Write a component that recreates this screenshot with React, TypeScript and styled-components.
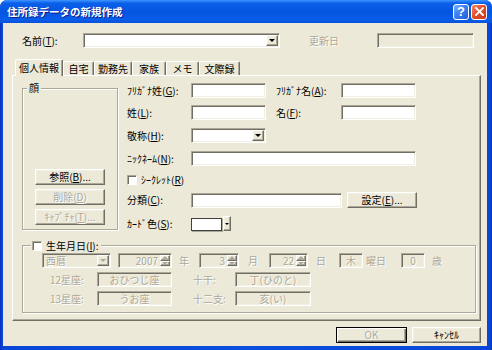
import styled, { createGlobalStyle, css } from 'styled-components'

const FACE = '#ece9d8'
const HILITE = '#ffffff'
const LIGHT = '#f1efe2'
const SHADOW = '#aca899'
const DARK = '#716f64'

const GlobalStyle = createGlobalStyle`
  *, *::before, *::after {
    box-sizing: border-box;
  }

  body {
    margin: 0;
    background: #ffffff;
    font-family: 'Noto Sans CJK JP', 'Noto Sans', sans-serif;
    font-size: 10px;
    color: #000000;
  }

  u {
    text-underline-offset: 1px;
  }
`

const sunken = css`
  border: 1px solid;
  border-color: ${SHADOW} ${HILITE} ${HILITE} ${SHADOW};
  box-shadow: inset 1px 1px ${DARK}, inset -1px -1px ${LIGHT};
`

const raised = css`
  border: 1px solid;
  border-color: ${HILITE} ${DARK} ${DARK} ${HILITE};
  box-shadow: inset -1px -1px ${SHADOW}, inset 1px 1px ${LIGHT};
`

const etched = css`
  border: 1px solid ${SHADOW};
  box-shadow: inset 1px 1px ${HILITE}, 1px 1px 0 ${HILITE};
`

const disabledText = css`
  color: ${SHADOW};
  text-shadow: 1px 1px 0 ${HILITE};
`

function Combo({ width, value, disabled }: { width: number; value?: string; disabled?: boolean }) {
  return (
    <Field $w={width} $disabled={disabled}>
      <FieldText $disabled={disabled}>{value}</FieldText>
      <DropButton>
        <Arrow $disabled={disabled} />
      </DropButton>
    </Field>
  )
}

function Spin({ width, value }: { width: number; value: string }) {
  return (
    <Field $w={width} $disabled>
      <FieldText $disabled $align="right">{value}</FieldText>
      <SpinButtons>
        <SpinHalf>
          <Arrow $disabled $up />
        </SpinHalf>
        <SpinHalf>
          <Arrow $disabled />
        </SpinHalf>
      </SpinButtons>
    </Field>
  )
}

function App() {
  return (
    <>
      <GlobalStyle />
      <Window>
        <TitleBar>
          <Title>住所録データの新規作成</Title>
          <CaptionButtons>
            <CaptionButton $kind="help">?</CaptionButton>
            <CaptionButton $kind="close">
              <svg width="9" height="9" viewBox="0 0 9 9">
                <path d="M1 1 L8 8 M8 1 L1 8" stroke="#ffffff" strokeWidth="1.8" strokeLinecap="square" />
              </svg>
            </CaptionButton>
          </CaptionButtons>
        </TitleBar>

        <Client>
          <NameRow>
            <Label $w={61}>
              名前(<u>T</u>):
            </Label>
            <Combo width={197} />
            <Label $w={68} $ml={29} $disabled>
              更新日
            </Label>
            <Field $w={97} $disabled />
          </NameRow>

          <TabStrip>
            <Tab $w={48} $active>個人情報</Tab>
            <Tab $w={31}>自宅</Tab>
            <Tab $w={38}>勤務先</Tab>
            <Tab $w={34}>家族</Tab>
            <Tab $w={33}>メモ</Tab>
            <Tab $w={41}>文際録</Tab>
          </TabStrip>

          <Panel>
            <Upper>
              <FaceGroup>
                <GroupTitle>顔</GroupTitle>
                <PushButton $w={70}>
                  参照(<u>B</u>)...
                </PushButton>
                <PushButton $w={70} $disabled>
                  削除(<u>D</u>)
                </PushButton>
                <PushButton $w={70} $disabled>
                  ｷｬﾌﾟﾁｬ(<u>T</u>)...
                </PushButton>
              </FaceGroup>

              <FormGrid>
                <Label>
                  ﾌﾘｶﾞﾅ姓(<u>G</u>):
                </Label>
                <Field $w={75} />
                <Label $col={4}>
                  ﾌﾘｶﾞﾅ名(<u>A</u>):
                </Label>
                <Field $w={75} />

                <Label>
                  姓(<u>L</u>):
                </Label>
                <Field $w={75} />
                <Label $col={4}>
                  名(<u>F</u>):
                </Label>
                <Field $w={75} />

                <Label>
                  敬称(<u>H</u>):
                </Label>
                <Combo width={75} />

                <Label $col={1}>
                  ﾆｯｸﾈｰﾑ(<u>N</u>):
                </Label>
                <Wide>
                  <Field $w={225} />
                </Wide>

                <CheckRow>
                  <CheckBox />
                  <span>
                    ｼｰｸﾚｯﾄ(<u>R</u>)
                  </span>
                </CheckRow>

                <Label $col={1}>
                  分類(<u>C</u>):
                </Label>
                <Wide>
                  <Field $w={151} />
                  <PushButton $w={70}>
                    設定(<u>E</u>)...
                  </PushButton>
                </Wide>

                <Label $col={1}>
                  ｶｰﾄﾞ色(<u>S</u>):
                </Label>
                <Wide>
                  <ColorBox />
                  <ColorDrop>
                    <Arrow $small />
                  </ColorDrop>
                </Wide>
              </FormGrid>
            </Upper>

            <BirthGroup>
              <BirthLegend>
                <CheckBox />
                <span>
                  生年月日(<u>I</u>):
                </span>
              </BirthLegend>

              <BirthRow>
                <Combo width={69} value="西暦" disabled />
                <Gap $ml={7} />
                <Spin width={54} value="2007" />
                <Unit $ml={7}>年</Unit>
                <Gap $ml={10} />
                <Spin width={40} value="3" />
                <Unit $ml={9}>月</Unit>
                <Gap $ml={11} />
                <Spin width={39} value="22" />
                <Unit $ml={8}>日</Unit>
                <Gap $ml={13} />
                <Field $w={24} $disabled>
                  <FieldText $disabled $align="center">木</FieldText>
                </Field>
                <Unit $ml={3}>曜日</Unit>
                <Gap $ml={15} />
                <Field $w={24} $disabled>
                  <FieldText $disabled $align="center">0</FieldText>
                </Field>
                <Unit $ml={7}>歳</Unit>
              </BirthRow>

              <InfoGrid>
                <Unit>12星座:</Unit>
                <Field $w={75} $disabled>
                  <FieldText $disabled $align="center">おひつじ座</FieldText>
                </Field>
                <Unit $col={4}>十干:</Unit>
                <Field $w={76} $disabled>
                  <FieldText $disabled $align="center">丁(ひのと)</FieldText>
                </Field>

                <Unit>13星座:</Unit>
                <Field $w={75} $disabled>
                  <FieldText $disabled $align="center">うお座</FieldText>
                </Field>
                <Unit $col={4}>十二支:</Unit>
                <Field $w={76} $disabled>
                  <FieldText $disabled $align="center">亥(い)</FieldText>
                </Field>
              </InfoGrid>
            </BirthGroup>
          </Panel>

          <Footer>
            <PushButton $w={71} $disabled $default>
              OK
            </PushButton>
            <PushButton $w={69}>ｷｬﾝｾﾙ</PushButton>
          </Footer>
        </Client>
      </Window>
    </>
  )
}

const Window = styled.div`
  width: 492px;
  height: 350px;
  display: flex;
  flex-direction: column;
  background: linear-gradient(90deg, #0a2fb8 0, #0846d8 2px, #0a4fe0 50%, #0846d8 calc(100% - 2px), #0a2fb8 100%);
  border-radius: 7px 7px 0 0;
  overflow: hidden;
`

const TitleBar = styled.div`
  height: 23px;
  flex: none;
  display: flex;
  align-items: center;
  padding: 0 5px 0 7px;
  background: linear-gradient(180deg, #3d95ff 0%, #0a5fe8 14%, #0555e2 55%, #0a5de8 85%, #0650dc 100%);
`

const Title = styled.div`
  flex: 1;
  color: #ffffff;
  font-weight: 700;
  font-size: 10.5px;
  line-height: 14px;
  text-shadow: 1px 1px 0 #0b1d8c;
`

const CaptionButtons = styled.div`
  display: flex;
  gap: 2px;
`

const CaptionButton = styled.div<{ $kind: 'help' | 'close' }>`
  width: 16px;
  height: 16px;
  border: 1px solid #ffffff;
  border-radius: 3px;
  display: flex;
  align-items: center;
  justify-content: center;
  color: #ffffff;
  font-family: 'Liberation Sans', sans-serif;
  font-weight: 700;
  font-size: 13px;
  line-height: 1;
  background: ${(p) =>
    p.$kind === 'close'
      ? 'linear-gradient(135deg, #f08a6c 0%, #e2502a 45%, #c8381a 100%)'
      : 'linear-gradient(135deg, #7fb2ff 0%, #3a80f2 45%, #1f5ed8 100%)'};
`

const Client = styled.div`
  flex: 1;
  margin: 0 5px 4px 3px;
  background: ${FACE};
  padding: 10px 6px 0 9px;
  display: flex;
  flex-direction: column;
`

const NameRow = styled.div`
  height: 15px;
  margin-left: 10px;
  display: flex;
  align-items: center;
`

const Label = styled.div<{ $w?: number; $ml?: number; $col?: number; $disabled?: boolean }>`
  ${(p) => (p.$w ? `width: ${p.$w}px;` : '')}
  ${(p) => (p.$ml ? `margin-left: ${p.$ml}px;` : '')}
  ${(p) => (p.$col ? `grid-column: ${p.$col};` : '')}
  height: 15px;
  display: flex;
  align-items: center;
  white-space: nowrap;
  line-height: 12px;
  ${(p) => (p.$disabled ? disabledText : '')}
`

const Field = styled.div<{ $w: number; $disabled?: boolean }>`
  ${sunken}
  width: ${(p) => p.$w}px;
  height: 15px;
  flex: none;
  padding: 1px;
  display: flex;
  align-items: stretch;
  background: ${(p) => (p.$disabled ? FACE : HILITE)};
`

const FieldText = styled.div<{ $disabled?: boolean; $align?: 'left' | 'right' | 'center' }>`
  flex: 1;
  padding: 0 2px;
  line-height: 11px;
  font-size: 10px;
  text-align: ${(p) => p.$align ?? 'left'};
  white-space: nowrap;
  ${(p) => (p.$disabled ? disabledText : '')}
`

const DropButton = styled.div`
  ${raised}
  width: 12px;
  flex: none;
  background: ${FACE};
  display: flex;
  align-items: center;
  justify-content: center;
`

const Arrow = styled.span<{ $disabled?: boolean; $up?: boolean; $small?: boolean }>`
  width: 0;
  height: 0;
  border-left: ${(p) => (p.$small ? 2 : 3)}px solid transparent;
  border-right: ${(p) => (p.$small ? 2 : 3)}px solid transparent;
  ${(p) => (p.$up ? 'border-bottom' : 'border-top')}: ${(p) => (p.$small ? 2 : 3)}px solid
    ${(p) => (p.$disabled ? SHADOW : '#000000')};
`

const SpinButtons = styled.div`
  width: 10px;
  flex: none;
  display: flex;
  flex-direction: column;
`

const SpinHalf = styled.div`
  ${raised}
  flex: 1;
  background: ${FACE};
  display: flex;
  align-items: center;
  justify-content: center;
`

const TabStrip = styled.div`
  height: 17px;
  margin: 11px 0 -1px;
  padding-left: 3px;
  display: flex;
  align-items: flex-start;
  position: relative;
  z-index: 1;
`

const Tab = styled.div<{ $w: number; $active?: boolean }>`
  width: ${(p) => p.$w}px;
  height: ${(p) => (p.$active ? 17 : 14)}px;
  margin-top: ${(p) => (p.$active ? 0 : 2)}px;
  background: ${FACE};
  border-top: 1px solid ${HILITE};
  border-left: 1px solid ${HILITE};
  border-right: 1px solid ${DARK};
  border-radius: 2px 2px 0 0;
  box-shadow: inset -1px 0 ${SHADOW};
  text-align: center;
  line-height: ${(p) => (p.$active ? 15 : 13)}px;
  white-space: nowrap;
`

const Panel = styled.div`
  width: 469px;
  height: 246px;
  flex: none;
  background: ${FACE};
  border-top: 1px solid ${HILITE};
  border-left: 1px solid ${HILITE};
  border-right: 1px solid ${DARK};
  border-bottom: 1px solid ${DARK};
  box-shadow: inset -1px -1px ${SHADOW};
  padding: 7px 0 0 9px;
  display: flex;
  flex-direction: column;
`

const Upper = styled.div`
  display: flex;
  gap: 9px;
`

const FaceGroup = styled.div`
  ${etched}
  position: relative;
  width: 96px;
  height: 142px;
  margin-top: 5px;
  padding-bottom: 4px;
  display: flex;
  flex-direction: column;
  justify-content: flex-end;
  align-items: center;
  gap: 4px;
`

const GroupTitle = styled.span`
  position: absolute;
  left: 4px;
  top: -7px;
  padding: 0 2px;
  line-height: 12px;
  background: ${FACE};
`

const PushButton = styled.div<{ $w: number; $disabled?: boolean; $default?: boolean }>`
  ${raised}
  width: ${(p) => p.$w}px;
  height: 16px;
  flex: none;
  background: ${FACE};
  text-align: center;
  line-height: 13px;
  white-space: nowrap;
  ${(p) => (p.$disabled ? disabledText : '')}
  ${(p) =>
    p.$default
      ? css`
          border-color: #000000;
          box-shadow: inset 1px 1px ${HILITE}, inset -1px -1px ${DARK}, inset -2px -2px ${SHADOW};
        `
      : ''}
`

const FormGrid = styled.div`
  display: grid;
  grid-template-columns: 64px 75px 10px 65px 75px;
  grid-template-rows: 22px 23px 23px 21px 20px 24px 16px;
  align-items: start;
`

const Wide = styled.div`
  grid-column: 2 / -1;
  display: flex;
  align-items: center;
  gap: 5px;
`

const CheckRow = styled.div`
  grid-column: 1 / -1;
  height: 15px;
  display: flex;
  align-items: center;
  gap: 4px;
  white-space: nowrap;
`

const CheckBox = styled.span`
  width: 10px;
  height: 10px;
  flex: none;
  background: ${HILITE};
  border: 1px solid;
  border-color: ${SHADOW} ${HILITE} ${HILITE} ${SHADOW};
  box-shadow: inset 1px 1px ${DARK};
`

const ColorBox = styled.div`
  width: 31px;
  height: 13px;
  margin-top: 1px;
  background: ${HILITE};
  border: 1px solid #404040;
  box-shadow: 1px 1px 0 ${SHADOW};
`

const ColorDrop = styled.div`
  ${raised}
  width: 8px;
  height: 15px;
  margin-left: -4px;
  background: ${FACE};
  display: flex;
  align-items: center;
  justify-content: center;
`

const BirthGroup = styled.div`
  ${etched}
  position: relative;
  width: 454px;
  height: 68px;
  margin-top: 13px;
  padding: 7px 0 0 19px;
`

const BirthLegend = styled.div`
  position: absolute;
  left: 8px;
  top: -8px;
  height: 15px;
  padding: 0 2px 0 1px;
  display: flex;
  align-items: center;
  gap: 4px;
  background: ${FACE};
  white-space: nowrap;
`

const BirthRow = styled.div`
  height: 15px;
  display: flex;
  align-items: center;
`

const Gap = styled.span<{ $ml: number }>`
  width: ${(p) => p.$ml}px;
  flex: none;
`

const Unit = styled.span<{ $ml?: number; $col?: number }>`
  ${(p) => (p.$ml ? `margin-left: ${p.$ml}px;` : '')}
  ${(p) => (p.$col ? `grid-column: ${p.$col};` : '')}
  line-height: 15px;
  white-space: nowrap;
  ${disabledText}
`

const InfoGrid = styled.div`
  margin: 4px 0 0 8px;
  display: grid;
  grid-template-columns: 47px 75px 21px 42px 76px;
  grid-auto-rows: 15px;
  row-gap: 4px;
`

const Footer = styled.div`
  margin-top: 6px;
  display: flex;
  justify-content: flex-end;
  gap: 5px;
`

export default App
